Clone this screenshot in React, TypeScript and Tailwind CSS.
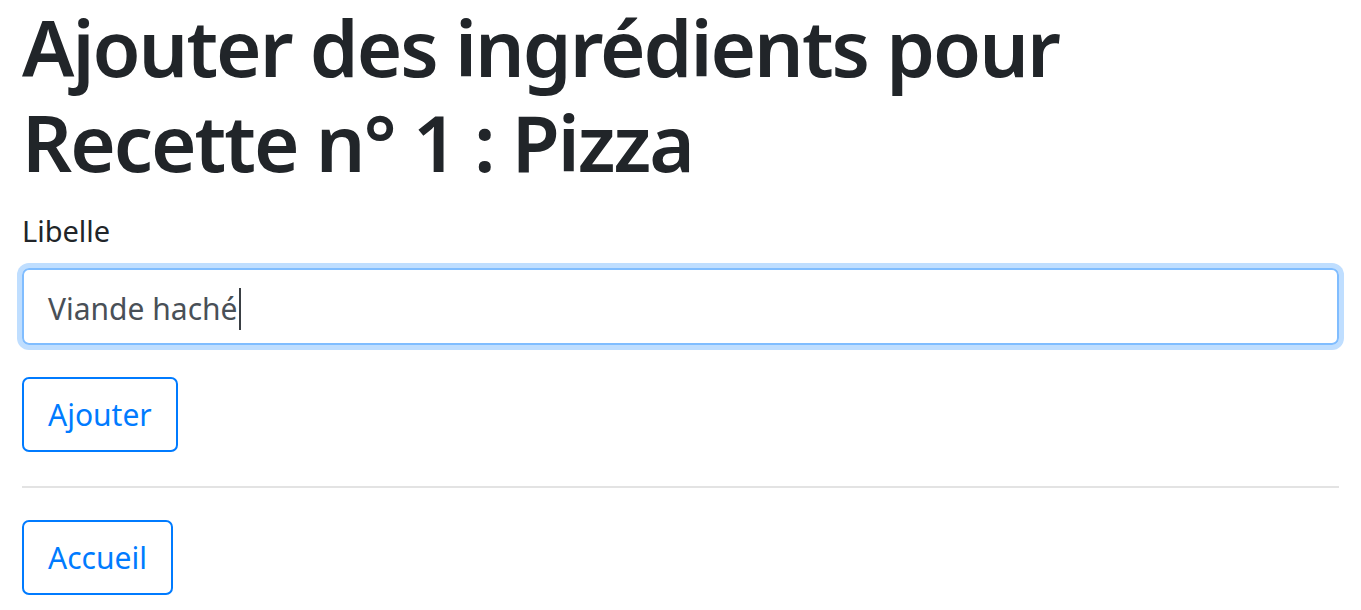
import React from "react";

export default function App() {
  return (
    <div className="min-h-screen bg-white px-[22px] font-['Noto_Sans','Open_Sans',sans-serif] text-[#212529]">
      <h1 className="m-0 text-[78px] font-semibold leading-[95px] tracking-[-2px] text-[#212529]">
        Ajouter des ingrédients pour
        <br />
        Recette n° 1 : Pizza
      </h1>
      <form className="mt-[19px]" onSubmit={(e) => e.preventDefault()}>
        <label className="block text-[29px] leading-[43px] text-[#212529]">Libelle</label>
        <div className="mt-[16px] flex h-[77px] items-center rounded-[7px] border-2 border-[#80bdff] px-[24px] pt-[4px] text-[30px] text-[#495057] shadow-[0_0_0_5px_#bfdeff]">
          <span>Viande haché</span>
          <span className="ml-[1px] h-[42px] w-[2px] bg-[#3a3f44]" />
        </div>
        <button
          type="submit"
          className="mt-[32px] h-[75px] rounded-[7px] border-2 border-[#007bff] px-[24px] text-[30px] text-[#007bff]"
        >
          Ajouter
        </button>
      </form>
      <hr className="mb-[32px] mt-[34px] border-t-2 border-[#e3e3e3]" />
      <button
        type="button"
        className="h-[75px] rounded-[7px] border-2 border-[#007bff] px-[24px] text-[30px] text-[#007bff]"
      >
        Accueil
      </button>
    </div>
  );
}
